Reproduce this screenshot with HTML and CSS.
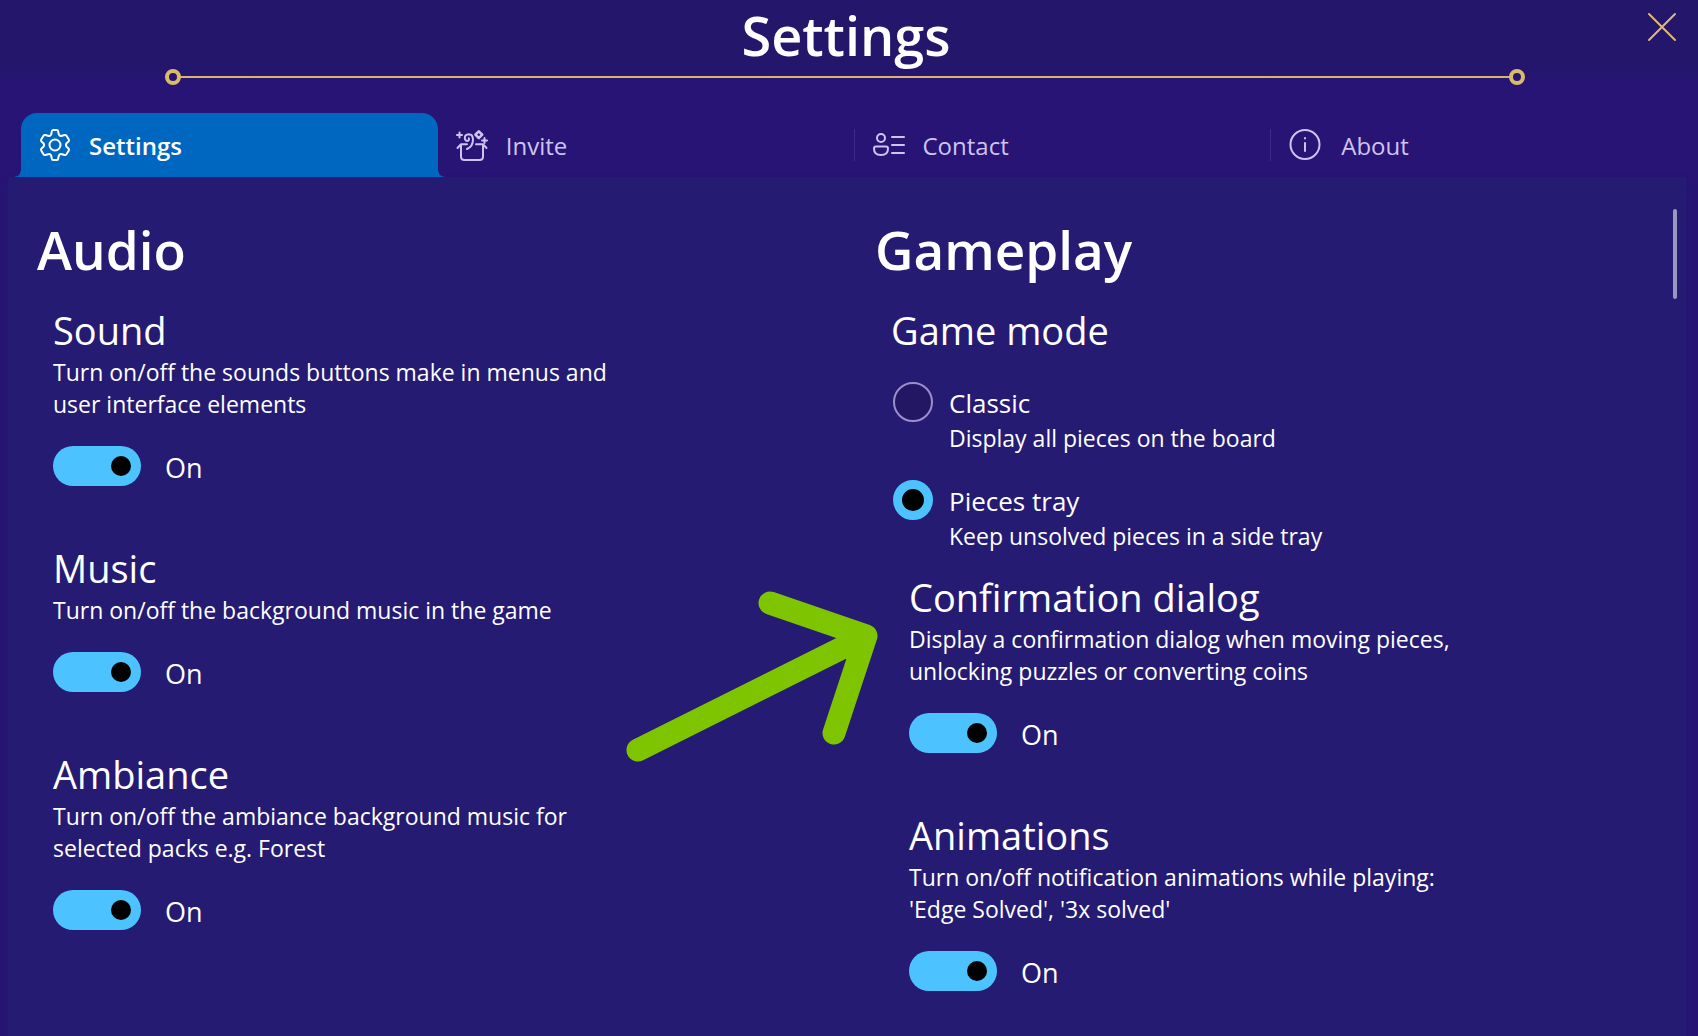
FILE: index.html
```html
<!DOCTYPE html>
<html lang="en">
<head>
<meta charset="utf-8">
<meta name="viewport" content="width=device-width, initial-scale=1">
<title>Settings</title>
<link rel="stylesheet" href="styles.css">
</head>
<body>
<header class="header">
  <h1 class="title">Settings</h1>
  <button class="close" type="button" aria-label="Close">
    <svg width="30" height="30" viewBox="0 0 30 30" fill="none" stroke="#e0b878" stroke-width="2" stroke-linecap="round"><path d="M2 2l26 26M28 2L2 28"/></svg>
  </button>
  <div class="rule"></div>
</header>

<div class="tabs" role="tablist">
  <button class="tab selected" type="button" role="tab" aria-selected="true">
    <svg class="icon" viewBox="0 0 32 32"><path d="M12.2 5.300L12.900 2.100Q13.200 1 14.300 1H17.700Q18.800 1 19.100 2.100L19.800 5.300Q20.800 7.500 23 6.800L25.600 6Q26.800 5.700 27.500 6.700L29.800 10.600Q30.300 11.700 29.500 12.500L27.600 14.200Q26.200 16 27.600 17.800L29.500 19.500Q30.300 20.300 29.800 21.400L27.500 25.300Q26.800 26.300 25.600 26L23 25.200Q20.800 24.500 19.800 26.700L19.100 29.900Q18.800 31 17.700 31H14.300Q13.200 31 12.900 29.900L12.200 26.700Q11.200 24.500 9 25.200L6.400 26Q5.200 26.300 4.500 25.300L2.200 21.400Q1.700 20.300 2.500 19.500L4.400 17.800Q5.800 16 4.400 14.200L2.500 12.500Q1.700 11.700 2.200 10.600L4.500 6.700Q5.200 5.700 6.400 6L9 6.800Q11.200 7.500 12.200 5.300Z"/><circle cx="16" cy="16" r="5.500"/></svg>
    <span>Settings</span>
  </button>
  <button class="tab" type="button" role="tab" aria-selected="false">
    <svg class="icon" viewBox="0 0 32 32"><path d="M1.500 19L5 15.200H11M20 15.200H27L30.500 19M5 15.200V27.500Q5 31 8.500 31H23.500Q27 31 27 27.500V15.200"/><path d="M11 20Q17 17.500 17 10.500Q16.800 5.300 12.800 5.300Q8.800 5.500 8.800 9Q9 12.200 11.700 11.900Q13.600 11.300 12.800 9.300"/><path d="M22.800 2.300L26.200 5.700L22.800 9.100L19.400 5.700Z" stroke-width="2.600"/><path d="M3.500 3.500V8.500M1 6H6M28.500 9V14M26 11.500H31"/></svg>
    <span>Invite</span>
  </button>
  <button class="tab" type="button" role="tab" aria-selected="false">
    <svg class="icon" viewBox="0 0 32 32"><circle cx="8" cy="9" r="4"/><path d="M3 17.500H13Q15 17.500 15 19.500Q15 26 8 26Q1 26 1 19.500Q1 17.500 3 17.500ZM19 8H31M19 16H31M19 24H31"/></svg>
    <span>Contact</span>
  </button>
  <button class="tab" type="button" role="tab" aria-selected="false">
    <svg class="icon" viewBox="0 0 32 32"><circle cx="16" cy="15.500" r="14.500"/><path d="M16 14V22M16 9V9.500"/></svg>
    <span>About</span>
  </button>
</div>

<main class="panel">
  <div class="columns">
    <section>
      <h2 class="section-title">Audio</h2>
      <div class="setting">
        <h3 class="name">Sound</h3>
        <p class="text">Turn on/off the sounds buttons make in menus and user interface elements</p>
        <label class="switch"><input class="toggle" type="checkbox" role="switch" checked><span>On</span></label>
      </div>
      <div class="setting">
        <h3 class="name">Music</h3>
        <p class="text">Turn on/off the background music in the game</p>
        <label class="switch"><input class="toggle" type="checkbox" role="switch" checked><span>On</span></label>
      </div>
      <div class="setting">
        <h3 class="name">Ambiance</h3>
        <p class="text">Turn on/off the ambiance background music for selected packs e.g. Forest</p>
        <label class="switch"><input class="toggle" type="checkbox" role="switch" checked><span>On</span></label>
      </div>
    </section>
    <section>
      <h2 class="section-title">Gameplay</h2>
      <div class="mode">
        <h3 class="name">Game mode</h3>
        <label class="option">
          <input class="radio" type="radio" name="mode">
          <span class="option-text"><span class="option-name">Classic</span><span class="text">Display all pieces on the board</span></span>
        </label>
        <label class="option">
          <input class="radio" type="radio" name="mode" checked>
          <span class="option-text"><span class="option-name">Pieces tray</span><span class="text">Keep unsolved pieces in a side tray</span></span>
        </label>
      </div>
      <div class="setting nested">
        <svg class="arrow" width="252" height="172" viewBox="0 0 252 172" fill="none" stroke="#7fc400" stroke-width="23" stroke-linecap="round" stroke-linejoin="round" aria-hidden="true"><path d="M12 159L240 45M144 12L240 45L208 142"/></svg>
        <h3 class="name">Confirmation dialog</h3>
        <p class="text">Display a confirmation dialog when moving pieces, unlocking puzzles or converting coins</p>
        <label class="switch"><input class="toggle" type="checkbox" role="switch" checked><span>On</span></label>
      </div>
      <div class="setting nested">
        <h3 class="name">Animations</h3>
        <p class="text">Turn on/off notification animations while playing: 'Edge Solved', '3x solved'</p>
        <label class="switch"><input class="toggle" type="checkbox" role="switch" checked><span>On</span></label>
      </div>
    </section>
  </div>
  <div class="scroll-thumb"></div>
</main>
</body>
</html>
```
FILE: styles.css
```css
*, *::before, *::after { box-sizing: border-box; }

body {
  margin: 0;
  min-height: 100vh;
  display: flex;
  flex-direction: column;
  background: linear-gradient(#23166b 0, #23166b 64px, #271474 84px);
  color: #fff;
  font-family: "Open Sans", "Noto Sans", sans-serif;
}

h1, h2, h3, p { margin: 0; font-weight: 400; }
button { font: inherit; color: inherit; background: none; border: 0; padding: 0; }

.header { position: relative; height: 113px; }
.title {
  height: 69px;
  padding-right: 6px;
  font-size: 54px;
  line-height: 70px;
  font-weight: 600;
  text-align: center;
}
.close { position: absolute; top: 12px; right: 21px; width: 30px; height: 30px; }
.close svg { display: block; }

/* Gold divider with a ring at each end */
.rule {
  display: flex;
  align-items: center;
  justify-content: space-between;
  margin: 0 173px 0 165px;
  height: 16px;
  background: linear-gradient(#d9b274, #d9b274) center / calc(100% - 30px) 2px no-repeat;
}
.rule::before, .rule::after {
  content: "";
  width: 16px;
  height: 16px;
  border: 4px solid #d9bb6c;
  border-radius: 50%;
}

.tabs { display: grid; grid-template-columns: repeat(4, 1fr); padding: 0 10px 0 21px; }
.tab {
  position: relative;
  display: flex;
  align-items: center;
  gap: 18px;
  height: 64px;
  padding-left: 18px;
  font-size: 24px;
  line-height: 32px;
  color: #cfc3f2;
}
.tab span { padding-top: 2px; }
.tab:last-child { gap: 20px; }
.icon {
  width: 32px;
  height: 32px;
  flex: none;
  fill: none;
  stroke: currentColor;
  stroke-width: 2;
  stroke-linecap: round;
  stroke-linejoin: round;
}
.tab:nth-child(n+3)::before {
  content: "";
  position: absolute;
  left: -1px;
  top: 16px;
  width: 1px;
  height: 32px;
  background: #3d2c86;
}
.tab.selected {
  background: #0067c0;
  border-radius: 16px 16px 0 0;
  color: #fff;
  font-weight: 600;
}
.tab.selected::before, .tab.selected::after {
  content: "";
  position: absolute;
  bottom: 0;
  width: 6px;
  height: 6px;
}
.tab.selected::before { right: 100%; background: radial-gradient(circle at 0 0, transparent 5px, #0067c0 6px); }
.tab.selected::after { left: 100%; background: radial-gradient(circle at 100% 0, transparent 5px, #0067c0 6px); }

.panel {
  flex: 1;
  display: flex;
  margin: 0 12px 0 8px;
  padding: 32px 9px 0 29px;
  background: #251b73;
  box-shadow: 0 8px 8px #251b73;
}
.columns { flex: 1; display: grid; grid-template-columns: 1fr 1fr; column-gap: 40px; }
.scroll-thumb { width: 4px; height: 90px; border-radius: 2px; background: #9c96c4; }

.section-title { font-size: 53px; line-height: 82px; font-weight: 600; margin-bottom: 13px; }
.setting { position: relative; margin: 0 0 56px 16px; }
.setting.nested { margin-left: 34px; }
.name { font-size: 38px; line-height: 52px; }
.text { max-width: 580px; font-size: 23px; line-height: 32px; }
.switch {
  display: inline-flex;
  align-items: center;
  gap: 24px;
  height: 40px;
  margin-top: 26px;
  font-size: 27px;
  line-height: 36px;
  vertical-align: top;
}
.switch span { padding-top: 3px; }

.toggle, .radio { appearance: none; margin: 0; flex: none; height: 40px; }
.toggle {
  width: 88px;
  padding: 10px;
  display: flex;
  border-radius: 20px;
  background: #4cc2ff;
  justify-content: flex-end;
}
.toggle::before { content: ""; width: 20px; height: 20px; border-radius: 50%; background: #000; }
.toggle:not(:checked) { background: #251b73; justify-content: flex-start; }

.radio {
  width: 40px;
  border: 2px solid #9a8fcc;
  border-radius: 50%;
  background: #231763;
}
.radio:checked { border: 9px solid #4cc2ff; background: #000; }

.mode { margin-left: 16px; padding-bottom: 19px; }
.option { display: flex; gap: 16px; margin-top: 26px; padding-left: 2px; }
.option-text { display: flex; flex-direction: column; }
.option-name { padding-top: 2px; font-size: 26px; line-height: 38px; }

.arrow { position: absolute; top: 20px; right: calc(100% + 31px); }
```
